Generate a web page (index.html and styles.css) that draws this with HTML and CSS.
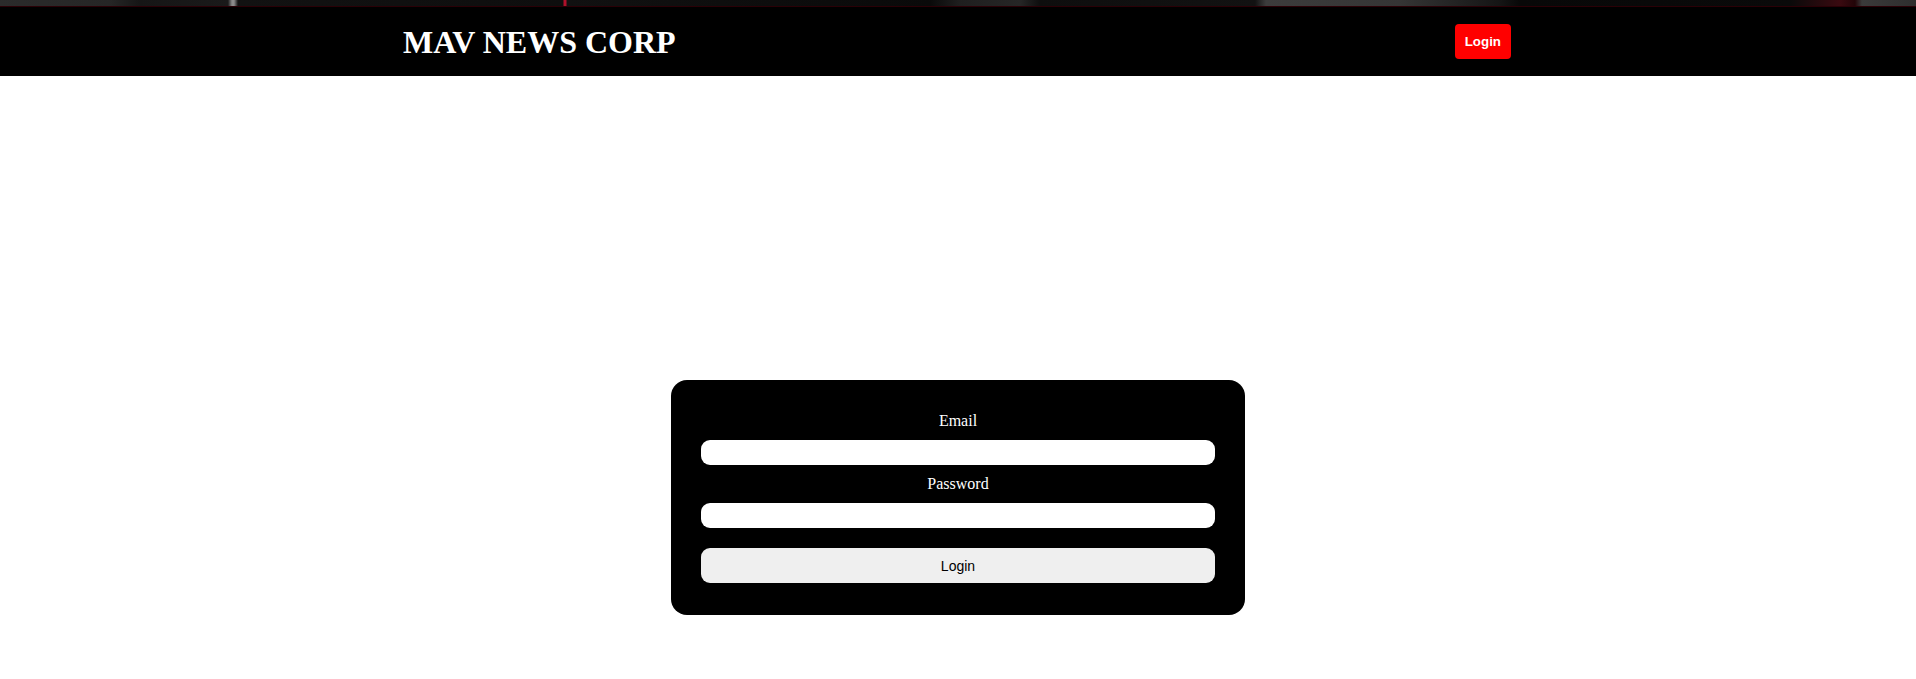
FILE: index.html
```html
<!DOCTYPE html>
<html lang="en">
<head>
<meta charset="utf-8">
<title>MAV NEWS CORP</title>
<link rel="stylesheet" href="styles.css">
</head>
<body>
<div class="strip"></div>
<header class="topbar">
  <div class="container">
    <h1 class="brand">MAV NEWS CORP</h1>
    <button class="nav-login" type="button">Login</button>
  </div>
</header>
<main class="page">
  <form class="card">
    <label class="field-label" for="email">Email</label>
    <input class="field" id="email" type="email">
    <label class="field-label" for="password">Password</label>
    <input class="field" id="password" type="password">
    <button class="submit" type="button">Login</button>
  </form>
</main>
</body>
</html>
```
FILE: styles.css
```css
html, body {
  margin: 0;
  padding: 0;
  background: #ffffff;
}

body {
  font-family: "Liberation Serif", "Times New Roman", serif;
}

.strip {
  height: 7px;
  background:
    linear-gradient(to bottom, transparent 0, transparent 6px, #2a0006 6px, #2a0006 7px),
    linear-gradient(to right,
      #2b2b2b 0, #262626 110px,
      #161616 140px, #1a1a1a 228px,
      #8a8a8a 232px, #8a8a8a 234px,
      #121212 238px, #0e0e0e 563px,
      #b0102a 564px, #b0102a 566px,
      #111111 567px, #0a0a0a 930px,
      #1f1f1f 960px, #262626 1020px,
      #0e0e0e 1040px, #121212 1255px,
      #3c3c3c 1266px, #353535 1400px, #151515 1500px,
      #080808 1520px, #0a0a0a 1790px,
      #3a0a10 1840px, #220508 1855px,
      #3a3a3a 1862px, #2e2e2e 1916px);
}

.topbar {
  background: #000000;
  height: 69px;
  display: flex;
  align-items: center;
}

.container {
  width: 1110px;
  margin: 0 auto;
  display: flex;
  align-items: center;
  justify-content: space-between;
}

.brand {
  margin: 0;
  font-family: "Liberation Serif", "Times New Roman", serif;
  font-size: 32px;
  font-weight: bold;
  color: #ffffff;
  line-height: 1;
}

.nav-login {
  background: #ff0000;
  color: #ffffff;
  border: none;
  border-radius: 4px;
  font-family: "Liberation Sans", Arial, sans-serif;
  font-size: 13.33px;
  font-weight: bold;
  padding: 10px 10px;
  line-height: 15px;
  margin-right: 2px;
}

.page {
  display: flex;
  justify-content: center;
  padding-top: 304px;
}

.card {
  width: 30%;
  box-sizing: border-box;
  background: #000000;
  border-radius: 16px;
  padding: 32px 30px 32px;
  display: flex;
  flex-direction: column;
  align-items: stretch;
}

.field-label {
  color: #ffffff;
  font-size: 16px;
  text-align: center;
  line-height: 18px;
}

.field {
  box-sizing: border-box;
  height: 25px;
  border: none;
  border-radius: 9px;
  background: #ffffff;
  margin: 10px 0 10px;
  padding: 0 10px;
}

#password {
  margin-bottom: 20px;
}

.submit {
  height: 35px;
  border: none;
  border-radius: 9px;
  background: #efefef;
  color: #000000;
  font-family: "Liberation Sans", Arial, sans-serif;
  font-size: 14px;
}
```
